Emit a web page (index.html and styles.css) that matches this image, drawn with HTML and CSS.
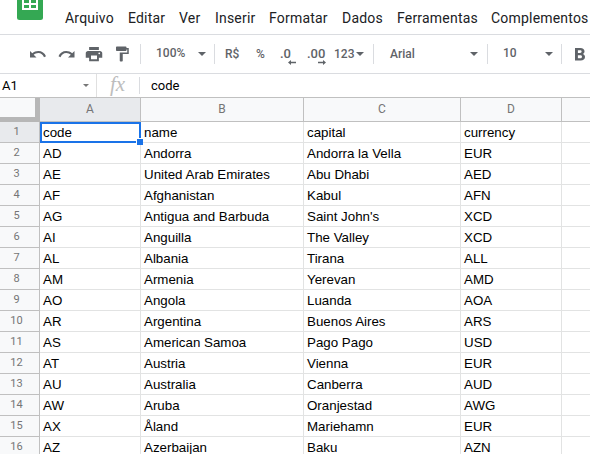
FILE: index.html
```
<!DOCTYPE html>
<html lang="pt-BR">
<head>
<meta charset="utf-8">
<title>Planilha</title>
<link rel="stylesheet" href="styles.css">
</head>
<body>
<header class="menubar">
  <svg class="logo" width="26" height="20" viewBox="0 0 26 20"><path d="M0 0H26V17.500Q26 20 23.500 20H2.500Q0 20 0 17.500Z" fill="#34a853"/><path d="M5 0H21V10H5Z" fill="#fff"/><path d="M7 0h5v3H7zM14 0h5v3h-5zM7 5h5v3H7zM14 5h5v3h-5z" fill="#34a853"/></svg>
  <nav class="menu"><span>Arquivo</span><span>Editar</span><span>Ver</span><span>Inserir</span><span>Formatar</span><span>Dados</span><span>Ferramentas</span><span>Complementos</span></nav>
</header>
<div class="toolbar">
  <svg class="icon" viewBox="0 0 18 18"><path d="M1 6L3.300 8.300C5 6.800 7 6 9.300 6C12.800 6 15.800 8 17 11.300L15 12.200C14 9.500 12 7.900 9.300 7.900C7.500 7.900 6 8.600 4.700 9.700L7.500 12.500H1Z"/></svg>
  <svg class="icon" viewBox="0 0 18 18"><path d="M17.500 6L15.200 8.300C13.500 6.800 11.500 6 9.200 6C5.700 6 2.700 8 1.500 11.300L3.500 12.200C4.500 9.500 6.500 7.900 9.200 7.900C11 7.900 12.500 8.600 13.800 9.700L11 12.500H17.500Z"/></svg>
  <svg class="icon" viewBox="0 0 24 24"><path d="M18.500 2.500h-13v4h13zM20 8H4c-1.660 0-3 1.340-3 3v6h4.500v4.500h13V17H23v-6c0-1.660-1.340-3-3-3zM16 19H8v-5h8zM19 12.300a1.200 1.200 0 1 1 0-2.400 1.200 1.200 0 0 1 0 2.400z"/></svg>
  <svg class="icon" viewBox="0 0 24 24"><path d="M18 4V3c0-.55-.45-1-1-1H5c-.55 0-1 .45-1 1v4c0 .55.45 1 1 1h12c.55 0 1-.45 1-1V6h1v4H9v11c0 .55.45 1 1 1h2c.55 0 1-.45 1-1v-9h8V4h-3z"/></svg>
  <i class="sep"></i>
  <span class="tool field">100%</span><i class="arrow"></i>
  <i class="sep"></i>
  <span class="tool">R$</span><span class="tool">%</span>
  <span class="tool decimals">.0<svg width="8" height="5" viewBox="0 0 8 5"><path d="M0 2.500L3 0V1.700H8V3.300H3V5Z"/></svg></span>
  <span class="tool decimals">.00<svg width="8" height="5" viewBox="0 0 8 5"><path d="M8 2.500L5 0V1.700H0V3.300H5V5Z"/></svg></span>
  <span class="tool">123</span><i class="arrow"></i>
  <i class="sep"></i>
  <span class="tool">Arial</span><i class="arrow"></i>
  <i class="sep"></i>
  <span class="tool field">10</span><i class="arrow"></i>
  <i class="sep"></i>
  <svg class="bold" width="10" height="13" viewBox="0 0 10 13"><path fill-rule="evenodd" d="M0 0H5.300C8 0 9.500 1.300 9.500 3.300C9.500 4.600 8.900 5.500 7.900 6C9.300 6.500 10 7.600 10 9C10 11.300 8.300 12.500 5.700 12.500H0ZM2.900 2.300V5H5.100C6.100 5 6.600 4.500 6.600 3.600S6.100 2.300 5.100 2.300ZM2.900 7.200V10.200H5.400C6.500 10.200 7 9.600 7 8.700S6.500 7.200 5.400 7.200Z"/></svg>
</div>
<div class="formula">
  <span class="ref">A1</span><i class="small-arrow"></i><i class="line"></i><span class="fx">fx</span><i class="fx-line"></i><span class="value">code</span>
</div>
<table class="sheet">
  <colgroup><col class="c-num"><col class="c-a"><col class="c-b"><col class="c-c"><col class="c-d"><col class="c-e"></colgroup>
  <thead><tr><th class="corner"></th><th class="active">A</th><th>B</th><th>C</th><th>D</th><th></th></tr></thead>
  <tbody>
    <tr><th class="active">1</th><td class="selected">code</td><td>name</td><td>capital</td><td>currency</td><td></td></tr>
    <tr><th>2</th><td>AD</td><td>Andorra</td><td>Andorra la Vella</td><td>EUR</td><td></td></tr>
    <tr><th>3</th><td>AE</td><td>United Arab Emirates</td><td>Abu Dhabi</td><td>AED</td><td></td></tr>
    <tr><th>4</th><td>AF</td><td>Afghanistan</td><td>Kabul</td><td>AFN</td><td></td></tr>
    <tr><th>5</th><td>AG</td><td>Antigua and Barbuda</td><td>Saint John's</td><td>XCD</td><td></td></tr>
    <tr><th>6</th><td>AI</td><td>Anguilla</td><td>The Valley</td><td>XCD</td><td></td></tr>
    <tr><th>7</th><td>AL</td><td>Albania</td><td>Tirana</td><td>ALL</td><td></td></tr>
    <tr><th>8</th><td>AM</td><td>Armenia</td><td>Yerevan</td><td>AMD</td><td></td></tr>
    <tr><th>9</th><td>AO</td><td>Angola</td><td>Luanda</td><td>AOA</td><td></td></tr>
    <tr><th>10</th><td>AR</td><td>Argentina</td><td>Buenos Aires</td><td>ARS</td><td></td></tr>
    <tr><th>11</th><td>AS</td><td>American Samoa</td><td>Pago Pago</td><td>USD</td><td></td></tr>
    <tr><th>12</th><td>AT</td><td>Austria</td><td>Vienna</td><td>EUR</td><td></td></tr>
    <tr><th>13</th><td>AU</td><td>Australia</td><td>Canberra</td><td>AUD</td><td></td></tr>
    <tr><th>14</th><td>AW</td><td>Aruba</td><td>Oranjestad</td><td>AWG</td><td></td></tr>
    <tr><th>15</th><td>AX</td><td>Åland</td><td>Mariehamn</td><td>EUR</td><td></td></tr>
    <tr><th>16</th><td>AZ</td><td>Azerbaijan</td><td>Baku</td><td>AZN</td><td></td></tr>
  </tbody>
</table>
</body>
</html>
```
FILE: styles.css
```
*, *::before, *::after { box-sizing: border-box; }
body { margin: 0; width: 590px; height: 454px; overflow: hidden; background: #fff; font-family: Roboto, sans-serif; }
.menubar { display: flex; align-items: flex-start; height: 35px; padding-left: 17px; border-bottom: 1px solid #dadce0; }
.logo { flex: none; }
.menu { display: grid; grid-template-columns: 63px 51px 36px 54px 73px 55px 94px 99px; margin-left: 22px; font-size: 14px; line-height: 20px; padding-top: 8px; letter-spacing: .2px; color: #202124; white-space: nowrap; }

/* Each track holds one control together with the space after it. */
.toolbar { display: grid; align-items: center; height: 39px; border-bottom: 1px solid #dadce0; padding-left: 29px;
  grid-template-columns: 28px 28px 28px 27px 16px 42px 16px 11px 31px 24px 27px 27px 22px 17px 17px 80px 17px 16px 42px 16px 14px 10px; }
.icon { width: 18px; height: 18px; fill: #5f6368; }
.sep { width: 1px; height: 20px; background: #dadce0; }
.tool { font-size: 12px; font-weight: 500; line-height: 18px; color: #5f6368; white-space: nowrap; }
.field { padding-bottom: 2px; }
.decimals { position: relative; font-size: 13px; }
.decimals svg { position: absolute; left: 8px; top: 15px; fill: #5f6368; }
.decimals + .decimals svg { left: 11px; }
.arrow { width: 0; height: 0; border: 4px solid transparent; border-top-color: #5f6368; border-bottom: 0; }
.bold { fill: #5f6368; }

.formula { display: flex; align-items: center; height: 24px; border-bottom: 1px solid #c0c0c0; font-size: 13px; color: #000; }
.ref { width: 83px; padding-left: 2px; }
.small-arrow { width: 0; height: 0; border: 3px solid transparent; border-top-color: #777; border-bottom: 0; }
.line { width: 1px; height: 23px; margin-left: 7px; background: #e0e0e0; }
.fx { width: 42px; padding: 0 0 3px 13px; color: #bdbdbd; font: italic 21px/20px "Liberation Serif", serif; }
.fx-line { width: 1px; height: 17px; background: #dadce0; }
.value { padding-left: 11px; }

.sheet { width: 590px; table-layout: fixed; border-collapse: separate; border-spacing: 0; }
.c-num { width: 40px; }
.c-a { width: 101px; }
.c-b { width: 163px; }
.c-c { width: 157px; }
.c-d { width: 101px; }
.c-e { width: 28px; }
.sheet th { height: 21px; padding: 0; border: solid #c0c0c0; border-width: 0 1px 1px 0; background: #f8f9fa; color: #757575; font-size: 11px; font-weight: 400; line-height: 19px; vertical-align: top; }
.sheet tbody th { padding-right: 6px; }
.sheet thead th { height: 24px; font-size: 12px; line-height: 23px; }
.sheet th.active { background: #e8eaed; }
.sheet thead th.corner { border-right: 5px solid #b7b7b7; border-bottom: 5px solid #b7b7b7; }
.sheet td { height: 21px; padding: 1px 3px 0; border: solid #e2e3e3; border-width: 0 1px 1px 0; font: 13.333px/19px "Liberation Sans", sans-serif; color: #000; white-space: nowrap; }
.sheet thead th:last-child, .sheet td:last-child { border-right: 0; }
.sheet .selected { position: relative; }
.selected::before { content: ""; position: absolute; left: 0; top: 0; width: 101px; height: 21px; border: 2px solid #1a73e8; }
.selected::after { content: ""; position: absolute; right: -3px; bottom: -3px; width: 7px; height: 7px; background: #1a73e8; border: solid #fff; border-width: 1px 0 0 1px; }
```
